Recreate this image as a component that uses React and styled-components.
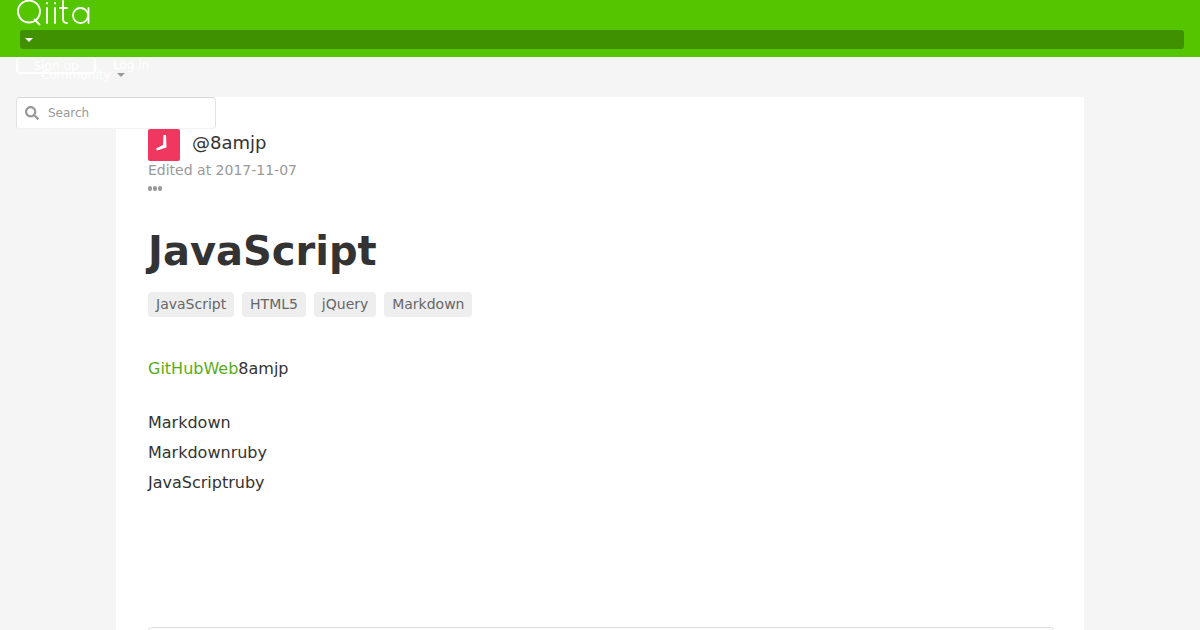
import React from 'react';
import styled, { createGlobalStyle } from 'styled-components';
import { FaSearch } from 'react-icons/fa';

const GlobalStyle = createGlobalStyle`
  html, body {
    margin: 0;
    height: 630px;
    overflow: hidden;
    background: #f5f5f5;
    font-family: "DejaVu Sans", sans-serif;
  }
`;

const Page = styled.div`
  position: relative;
  height: 630px;
  overflow: hidden;
`;

const Header = styled.header`
  position: relative;
  height: 57px;
  box-sizing: border-box;
  padding-left: 20px;
  padding-right: 16px;
  background: #55c500;
`;

const Logo = styled.svg`
  display: block;
  width: 76px;
  height: 30px;
  margin-left: -4px;
`;

const MenuBar = styled.div`
  height: 19px;
  display: flex;
  align-items: center;
  padding-left: 5px;
  border-radius: 3px;
  background: #3f9100;
`;

const Caret = styled.span`
  width: 0;
  height: 0;
  border-left: 4px solid transparent;
  border-right: 4px solid transparent;
  border-top: 4px solid ${({ $color }) => $color};
`;

const AuthRow = styled.div`
  position: absolute;
  top: 57px;
  left: 16px;
  display: flex;
  align-items: center;
  gap: 17px;
  color: #fff;
  font-size: 12px;
`;

const SignUp = styled.a`
  width: 80px;
  height: 17px;
  box-sizing: border-box;
  border: 2px solid #fff;
  border-top-width: 1px;
  border-radius: 4px;
  line-height: 17px;
  text-align: center;
`;

const LogIn = styled.a`
  line-height: 17px;
`;

const Community = styled.div`
  position: absolute;
  top: 67px;
  left: 41px;
  display: flex;
  align-items: center;
  gap: 7px;
  color: #fff;
  font-size: 12px;
  line-height: 16px;
`;

const SearchBox = styled.div`
  position: absolute;
  top: 97px;
  left: 16px;
  z-index: 1;
  width: 200px;
  height: 32px;
  box-sizing: border-box;
  display: flex;
  align-items: center;
  gap: 9px;
  padding-left: 8px;
  border: 1px solid #e2e2e2;
  border-top-color: #d8d8d8;
  border-bottom-color: #f2f2f2;
  border-radius: 4px;
  background: #fff;
  color: #999;
  font-size: 12px;
`;

const Card = styled.main`
  width: 968px;
  height: 533px;
  margin: 40px 0 0 116px;
  box-sizing: border-box;
  padding: 32px 30px 0 32px;
  overflow: hidden;
  background: #fff;
`;

const Author = styled.div`
  display: flex;
  align-items: center;
  gap: 12px;
`;

const Avatar = styled.svg`
  display: block;
  width: 32px;
  height: 32px;
  border-radius: 2px;
`;

const UserName = styled.span`
  margin-bottom: 5px;
  color: #333;
  font-size: 18px;
`;

const Edited = styled.div`
  margin-top: 1px;
  color: #999;
  font-size: 14px;
  line-height: 17px;
`;

const Dots = styled.div`
  display: flex;
  gap: 1px;
  margin-top: 7px;
`;

const Dot = styled.i`
  width: 4px;
  height: 5px;
  border-radius: 2px;
  background: #999;
`;

const Title = styled.h1`
  margin: 35px 0 0;
  color: #333;
  font-size: 40px;
  font-weight: 700;
  line-height: 50px;
`;

const Tags = styled.div`
  display: flex;
  gap: 7.9px;
  margin-top: 16px;
`;

const Tag = styled.span`
  padding: 0 8px;
  border-radius: 4px;
  background: #eee;
  color: #666;
  font-size: 14px;
  line-height: 25px;
`;

const Body = styled.div`
  margin-top: 37px;
  color: #333;
  font-size: 16px;
  line-height: 30px;
`;

const Paragraph = styled.p`
  margin: 0 0 24px;
`;

const Link = styled.a`
  color: #5bab17;
`;

const Line = styled.div``;

const Comments = styled.div`
  height: 40px;
  margin-top: 129px;
  border: 1px solid #ddd;
  border-radius: 4px;
`;

const tags = ['JavaScript', 'HTML5', 'jQuery', 'Markdown'];

export default function App() {
  return (
    <Page>
      <GlobalStyle />
      <Header>
        <Logo viewBox="0 0 76 30" fill="none" stroke="#fff" strokeWidth="1.8" strokeLinecap="round">
          <circle cx="13" cy="11.500" r="11" />
          <path d="M18.500 19.500l5 5" />
          <path d="M31 8v15M39 8v15M31 3v.4M39 3v.4" />
          <path d="M47 1v18c0 2.500 1 4 4 4M44 8h7" />
          <circle cx="64.500" cy="15.500" r="7.500" />
          <path d="M72.500 8v15" />
        </Logo>
        <MenuBar>
          <Caret $color="#fff" />
        </MenuBar>
      </Header>
      <AuthRow>
        <SignUp>Sign up</SignUp>
        <LogIn>Log in</LogIn>
      </AuthRow>
      <Community>
        Community
        <Caret $color="#999" />
      </Community>
      <SearchBox>
        <FaSearch size={14} color="#999" />
        Search
      </SearchBox>
      <Card>
        <Author>
          <Avatar viewBox="0 0 32 32">
            <rect width="32" height="32" fill="#f0375f" />
            <path d="M15.500 6h2.500l.5 12.500L9 21.500 8 19.500l7-3.500z" fill="#fff" />
          </Avatar>
          <UserName>@8amjp</UserName>
        </Author>
        <Edited>Edited at 2017-11-07</Edited>
        <Dots>
          <Dot />
          <Dot />
          <Dot />
        </Dots>
        <Title>JavaScript</Title>
        <Tags>
          {tags.map((tag) => (
            <Tag key={tag}>{tag}</Tag>
          ))}
        </Tags>
        <Body>
          <Paragraph>
            <Link>GitHubWeb</Link>8amjp
          </Paragraph>
          <Line>Markdown</Line>
          <Line>Markdownruby</Line>
          <Line>JavaScriptruby</Line>
        </Body>
        <Comments />
      </Card>
    </Page>
  );
}
